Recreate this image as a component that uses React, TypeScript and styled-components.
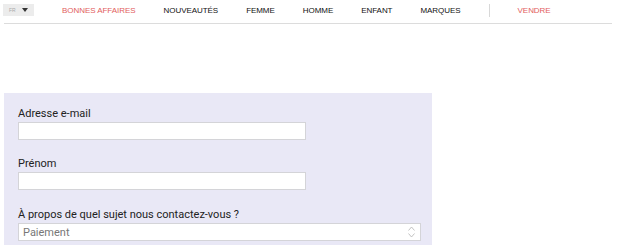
import styled, { createGlobalStyle } from "styled-components";

const GlobalStyle = createGlobalStyle`
  body {
    margin: 0;
    background: #ffffff;
    font-family: Roboto, "Liberation Sans", Arial, sans-serif;
  }
`;

const Header = styled.header`
  display: flex;
  flex-direction: column;
`;

const NavBar = styled.nav`
  display: flex;
  align-items: center;
  gap: 28px;
  height: 16px;
  padding: 2px 0 0 3px;
`;

const LangBox = styled.div`
  display: flex;
  align-items: center;
  gap: 6px;
  width: 31px;
  height: 12px;
  box-sizing: border-box;
  padding-left: 6px;
  background: #ececec;
  font-family: "Liberation Sans", Arial, sans-serif;
  font-size: 5px;
  color: #aaa;
`;

const Caret = styled.span`
  width: 0;
  height: 0;
  border-left: 3px solid transparent;
  border-right: 3px solid transparent;
  border-top: 4px solid #333;
`;

const NavLink = styled.a<{ $accent?: boolean }>`
  font-family: "Liberation Sans", Arial, sans-serif;
  font-size: 8px;
  letter-spacing: -0.05px;
  text-decoration: none;
  white-space: nowrap;
  color: ${(p) => (p.$accent ? "#e2605e" : "#111")};
`;

const Divider = styled.span`
  width: 1px;
  height: 13px;
  background: #d8d8d8;
`;

const Rule = styled.div`
  height: 1px;
  background: #dcdcdc;
  margin: 5px 5px 0 4px;
`;

const Panel = styled.form`
  width: 428px;
  margin: 69px 0 0 4px;
  padding: 14px 0 6px 14px;
  box-sizing: border-box;
  background: #e9e8f6;
  display: flex;
  flex-direction: column;
  gap: 17px;
`;

const Field = styled.div<{ $tight?: boolean }>`
  display: flex;
  flex-direction: column;
  gap: 1px;
  margin-top: ${(p) => (p.$tight ? "1px" : "0")};
`;

const Label = styled.label`
  font-size: 11px;
  line-height: 14px;
  color: #222;
`;

const TextInput = styled.input`
  width: 288px;
  height: 18px;
  box-sizing: border-box;
  border: 1px solid #d4d4d8;
  background: #fff;
  margin: 0;
  padding: 0 4px;
  font: inherit;
`;

const SelectBox = styled.div`
  width: 403px;
  height: 18px;
  box-sizing: border-box;
  border: 1px solid #d4d4d8;
  background: #fff;
  display: flex;
  align-items: center;
  justify-content: space-between;
  padding: 0 5px 0 4px;
  font-size: 11px;
  color: #777;
`;

const navItems = [
  { label: "BONNES AFFAIRES", accent: true },
  { label: "NOUVEAUTÉS" },
  { label: "FEMME" },
  { label: "HOMME" },
  { label: "ENFANT" },
  { label: "MARQUES" },
];

function UpDown() {
  return (
    <svg width="7" height="12" viewBox="0 0 7 12" fill="none" stroke="#b5b5b5" strokeWidth="0.8">
      <path d="M0.5 4.5 L3.5 1 L6.5 4.5" />
      <path d="M0.5 7.5 L3.5 11 L6.5 7.5" />
    </svg>
  );
}

export default function App() {
  return (
    <>
      <GlobalStyle />
      <Header>
        <NavBar>
          <LangBox>
            FR
            <Caret />
          </LangBox>
          {navItems.map((item) => (
            <NavLink key={item.label} href="#" $accent={item.accent}>
              {item.label}
            </NavLink>
          ))}
          <Divider />
          <NavLink href="#" $accent>
            VENDRE
          </NavLink>
        </NavBar>
        <Rule />
      </Header>
      <Panel>
        <Field>
          <Label>Adresse e-mail</Label>
          <TextInput type="email" />
        </Field>
        <Field>
          <Label>Prénom</Label>
          <TextInput type="text" />
        </Field>
        <Field $tight>
          <Label>À propos de quel sujet nous contactez-vous ?</Label>
          <SelectBox>
            Paiement
            <UpDown />
          </SelectBox>
        </Field>
      </Panel>
    </>
  );
}
